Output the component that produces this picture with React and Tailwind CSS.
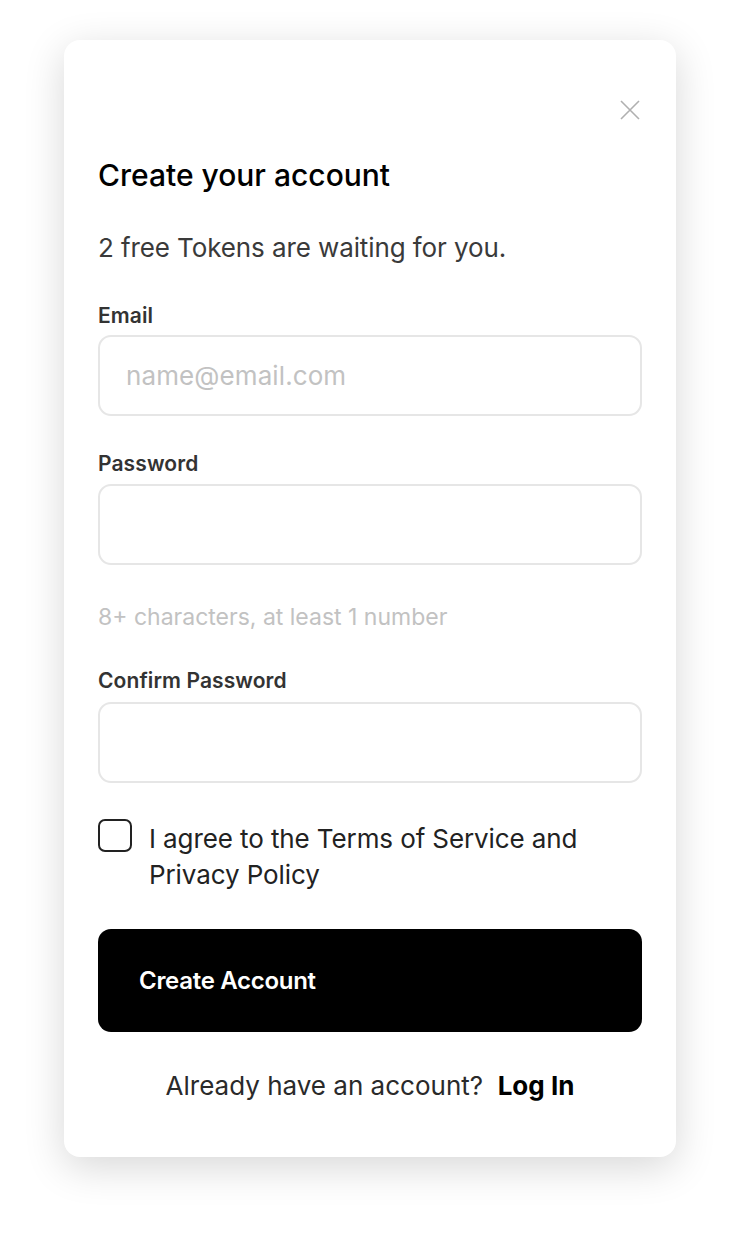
import React from "react";

export default function App() {
  return (
    <div className="min-h-[1245px] w-[740px] bg-white pt-[40px] pl-[64px]" style={{ fontFamily: "Inter, 'Noto Sans', sans-serif" }}>
      <div className="w-[612px] h-[1117px] rounded-[16px] bg-white shadow-[0_10px_40px_rgba(0,0,0,0.16)] pl-[34px] pr-[34px] flex flex-col">
        <div className="flex justify-end pt-[60px] pr-[2px]">
          <svg width="20" height="20" viewBox="0 0 20 20" fill="none" stroke="#b0b0b0" strokeWidth="1.6">
            <path d="M1 1L19 19M19 1L1 19" />
          </svg>
        </div>
        <h1 className="mt-[37px] text-[30px] font-medium leading-[36px] text-black tracking-[0px]">Create your account</h1>
        <p className="mt-[39px] text-[26px] leading-[32px] text-[#3a3a3a] tracking-[-0.1px]">2 free Tokens are waiting for you.</p>

        <label className="mt-[39px] text-[21px] font-semibold leading-[26px] text-[#333] tracking-[0.1px]">Email</label>
        <div className="mt-[6px] h-[81px] rounded-[13px] border-2 border-[#e6e6e6] flex items-center px-[26px]">
          <span className="text-[26px] text-[#c2c2c2] tracking-[0.1px]">name@email.com</span>
        </div>

        <label className="mt-[35px] text-[21px] font-semibold leading-[26px] text-[#333] tracking-[0.1px]">Password</label>
        <div className="mt-[7px] h-[81px] rounded-[13px] border-2 border-[#e6e6e6]" />

        <p className="mt-[38px] text-[23px] leading-[28px] text-[#c2c2c2] tracking-[0px]">8+ characters, at least 1 number</p>

        <label className="mt-[37px] text-[21px] font-semibold leading-[26px] text-[#333] tracking-[0.1px]">Confirm Password</label>
        <div className="mt-[8px] h-[81px] rounded-[13px] border-2 border-[#e6e6e6]" />

        <div className="mt-[35px] flex gap-[17px]">
          <div className="mt-[1px] w-[34px] h-[33px] shrink-0 rounded-[7px] border-2 border-[#222]" />
          <p className="text-[26px] leading-[36px] text-[#222] tracking-[-0.1px] mt-[3px]">I agree to the Terms of Service and Privacy Policy</p>
        </div>

        <button className="mt-[36px] h-[103px] rounded-[13px] bg-black text-left pl-[41px]">
          <span className="text-[24px] font-semibold text-white tracking-[-0.3px]">Create Account</span>
        </button>

        <p className="mt-[37px] text-center text-[26px] leading-[34px] text-[#2a2a2a] tracking-[0px]">
          Already have an account?&nbsp; <span className="font-bold text-black">Log In</span>
        </p>
      </div>
    </div>
  );
}
